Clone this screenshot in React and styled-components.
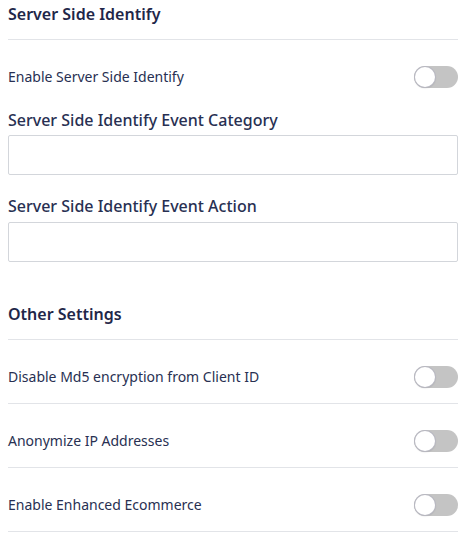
import React from "react";
import styled, { createGlobalStyle } from "styled-components";

const Global = createGlobalStyle`
  html, body { margin: 0; padding: 0; background: #ffffff; }
  body { font-family: "Noto Sans", "Open Sans", Arial, sans-serif; color: #283052; }
  * { box-sizing: border-box; }
`;

const Page = styled.div`
  width: 466px;
  padding: 0 8px;
  display: flex;
  flex-direction: column;
`;

const SectionHeader = styled.div`
  height: 40px;
  border-bottom: 1px solid #e2e4e8;
  margin-top: ${(p) => p.$top || 0}px;
`;

const Heading = styled.h3`
  margin: 0;
  font-size: 16px;
  line-height: 28px;
  font-weight: 600;
  color: #1f2749;
`;

const ToggleRow = styled.div`
  display: flex;
  align-items: center;
  justify-content: space-between;
  padding: 26px 0 ${(p) => (p.$noBorder ? 21 : 15)}px;
  border-bottom: ${(p) => (p.$noBorder ? "none" : "1px solid #e2e4e8")};
`;

const RowLabel = styled.span`
  font-size: 14px;
  line-height: 20px;
  color: #283052;
`;

const Track = styled.span`
  position: relative;
  width: 44px;
  height: 22px;
  border-radius: 11px;
  background: #c4c4c4;
  flex-shrink: 0;
`;

const Knob = styled.span`
  position: absolute;
  left: 1px;
  top: 1px;
  width: 20px;
  height: 20px;
  border-radius: 50%;
  background: #ffffff;
  box-shadow: 0 0 0 1px #b9b9c2, 0 1px 2px rgba(0, 0, 0, 0.2);
`;

const Field = styled.div`
  display: flex;
  flex-direction: column;
  gap: ${(p) => p.$gap || 4}px;
  margin-top: ${(p) => p.$top || 0}px;
`;

const FieldLabel = styled.label`
  font-size: 16px;
  line-height: 22px;
  font-weight: 500;
  color: #283052;
`;

const Input = styled.input`
  width: 100%;
  height: 40px;
  border: 1px solid #d3d6db;
  border-radius: 2px;
  padding: 0 10px;
  font-family: inherit;
  font-size: 14px;
  outline: none;
  background: #fff;
`;

const Toggle = () => (
  <Track>
    <Knob />
  </Track>
);

export default function App() {
  return (
    <Page>
      <Global />
      <SectionHeader>
        <Heading>Server Side Identify</Heading>
      </SectionHeader>
      <ToggleRow $noBorder>
        <RowLabel>Enable Server Side Identify</RowLabel>
        <Toggle />
      </ToggleRow>
      <Field>
        <FieldLabel>Server Side Identify Event Category</FieldLabel>
        <Input type="text" />
      </Field>
      <Field $top={20} $gap={5}>
        <FieldLabel>Server Side Identify Event Action</FieldLabel>
        <Input type="text" />
      </Field>
      <SectionHeader $top={38}>
        <Heading>Other Settings</Heading>
      </SectionHeader>
      <ToggleRow>
        <RowLabel>Disable Md5 encryption from Client ID</RowLabel>
        <Toggle />
      </ToggleRow>
      <ToggleRow>
        <RowLabel>Anonymize IP Addresses</RowLabel>
        <Toggle />
      </ToggleRow>
      <ToggleRow>
        <RowLabel>Enable Enhanced Ecommerce</RowLabel>
        <Toggle />
      </ToggleRow>
    </Page>
  );
}
